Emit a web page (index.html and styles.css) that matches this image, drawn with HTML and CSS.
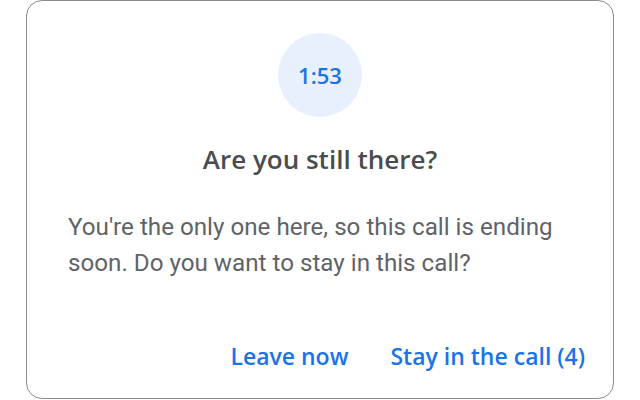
FILE: index.html
```html
<!DOCTYPE html>
<html>
<head>
  <title>Are you still there?</title>
  <link rel="stylesheet" href="styles.css">
</head>
<body>
  <div class="dialog">
    <div class="timer">1:53</div>
    <h2 class="dialog-title">Are you still there?</h2>
    <p class="dialog-text">You're the only one here, so this call is ending soon. Do you want to stay in this call?</p>
    <div class="dialog-actions">
      <button class="text-button">Leave now</button>
      <button class="text-button">Stay in the call (4)</button>
    </div>
  </div>
</body>
</html>
```

FILE: styles.css
```css
body {
  margin: 0;
  background-color: white;
  font-family: Roboto, Arial, sans-serif;
}

.dialog {
  box-sizing: border-box;
  width: 588px;
  height: 399px;
  margin-left: 26px;
  padding: 32px 41px 0;
  border: 1px solid #8c8c8c;
  border-radius: 16px;
  display: flex;
  flex-direction: column;
}

/* Countdown bubble */
.timer {
  align-self: center;
  width: 84px;
  height: 84px;
  border-radius: 50%;
  background-color: #e8f0fe;
  color: #1a73e8;
  display: flex;
  align-items: center;
  justify-content: center;
  font-family: "Open Sans", Arial, sans-serif;
  font-size: 22px;
  font-weight: 600;
}

.dialog-title {
  margin: 26px 0 0;
  text-align: center;
  color: #4a4d50;
  font-family: "Open Sans", Arial, sans-serif;
  font-size: 26px;
  font-weight: 600;
  line-height: 32px;
}

.dialog-text {
  margin: 34px 0 0;
  color: #5f6368;
  font-size: 24.2px;
  line-height: 36px;
}

.dialog-actions {
  margin: auto -13px 26px 0;
  display: flex;
  justify-content: flex-end;
  gap: 42px;
}

.text-button {
  padding: 0;
  border: none;
  background: none;
  color: #1a73e8;
  font-family: "Open Sans", Arial, sans-serif;
  font-size: 23px;
  font-weight: 600;
  cursor: pointer;
}
```
